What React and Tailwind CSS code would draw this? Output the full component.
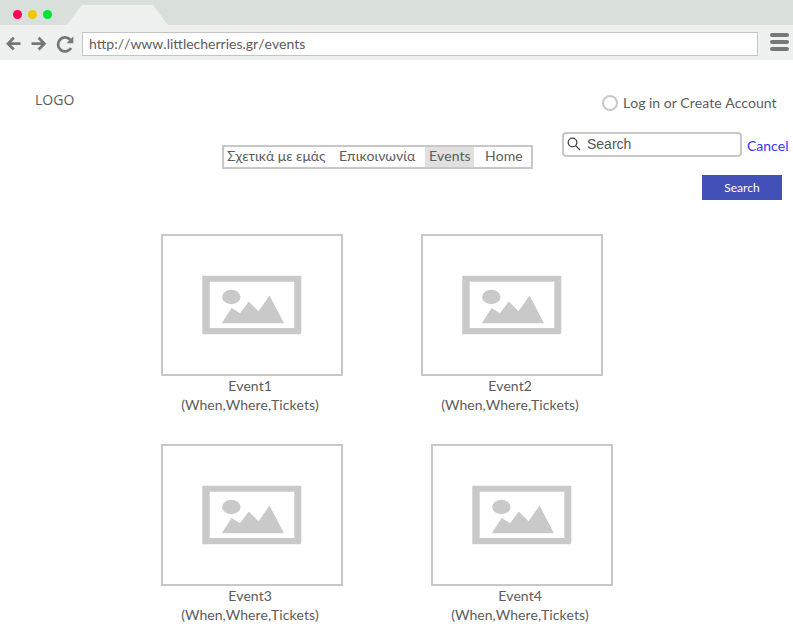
import React from "react";

function BrowserBar() {
  return (
    <header className="bg-[#eff1f0]">
      <div className="flex h-[25px] bg-[#d9dfdb]">
        <div className="flex w-[67px] items-center gap-[6px] pt-[4px] pl-[12.500px]">
          <span className="size-[9px] rounded-full bg-[#ff0055]" />
          <span className="size-[9px] rounded-full bg-[#f3c500]" />
          <span className="size-[9px] rounded-full bg-[#00e335]" />
        </div>
        <svg className="h-[25px] w-[101px]" viewBox="0 0 101 25">
          <path d="M0 25 L14.500 5 H86 L101 25 Z" fill="#eff1f0" />
        </svg>
      </div>
      <div className="flex h-[35px] items-start">
        <svg
          className="h-[35px] w-[82px]"
          viewBox="0 25 82 35"
          fill="none"
          stroke="#777"
          strokeWidth="2.800"
        >
          <path d="M20.500 43.700 H8.500 M13.800 37.800 L8 43.700 L13.800 49.600" />
          <path d="M31.500 43.700 H44 M38.600 37.800 L44.400 43.700 L38.600 49.600" />
          <path d="M70.600 40.200 A7 7 0 1 0 71 48.100" />
          <path d="M73.300 36.500 V43.200 H66.500 Z" fill="#777" stroke="none" />
        </svg>
        <div className="mt-[7px] flex h-[24px] w-[676px] items-center border border-[#c4c4c4] bg-white pl-[6px] text-[14px] leading-[22px]">
          http://www.littlecherries.gr/events
        </div>
        <div className="mt-[8px] ml-[12px] flex w-[19px] flex-col gap-[3px]">
          <span className="h-[4px] rounded-full bg-[#777]" />
          <span className="h-[4px] rounded-full bg-[#777]" />
          <span className="h-[4px] rounded-full bg-[#777]" />
        </div>
      </div>
    </header>
  );
}

function Toolbar() {
  return (
    <div className="flex h-[174px] items-start">
      <div className="mt-[30px] ml-[35px] w-[187px] font-['Open_Sans',sans-serif] text-[14px] leading-[19px]">
        LOGO
      </div>
      <nav className="mt-[85px] flex h-[24px] w-[311px] border-2 border-[#c8c8c8] leading-[18px]">
        <a className="w-[112px] pl-[3px]">Σχετικά με εμάς</a>
        <a className="w-[89px] pl-[3px]">Επικοινωνία</a>
        <a className="w-[49px] bg-[#e0e0e0] pl-[4px]">Events</a>
        <a className="pl-[11px]">Home</a>
      </nav>
      <div className="ml-[29px] flex w-[231px] flex-col">
        <div className="mt-[32px] ml-[39.500px] flex h-[21px] items-center gap-[5.500px]">
          <span className="size-[16px] rounded-full border-2 border-[#c8c8c8]" />
          <span className="leading-[20px]">Log in or Create Account</span>
        </div>
        <div className="mt-[19px] flex h-[25px]">
          <div className="flex w-[180px] items-center rounded-[4px] border-2 border-[#c8c8c8] pl-[3px]">
            <svg className="mb-[1px] size-[14px]" viewBox="0 0 14 14" fill="none" stroke="#444" strokeWidth="1.300">
              <circle cx="5.500" cy="5.500" r="4.300" />
              <path d="M8.600 8.600 L13 13" />
            </svg>
            <span className="ml-[6px] font-['Liberation_Sans',Arial,sans-serif] text-[14px] text-[#555]">
              Search
            </span>
          </div>
          <a className="mt-[4px] ml-[5px] leading-[20px] text-[#3333ff]">Cancel</a>
        </div>
        <button className="mt-[18px] ml-[140px] h-[25px] w-[80px] bg-[#4350b8] text-[12px] text-white">
          Search
        </button>
      </div>
    </div>
  );
}

function EventCard({ title }) {
  return (
    <article className="w-[182px]">
      <div className="h-[142px] border-2 border-[#c8c8c8]">
        <svg className="h-[138px] w-[178px]" viewBox="0 0 178 138" fill="#c9c9c9">
          <path
            fillRule="evenodd"
            d="M39.300 39.800 H138.300 V97 L137 98.300 H39.300 Z M46.700 45.700 V92 H131.300 V45.700 Z"
          />
          <ellipse cx="68.300" cy="61" rx="9.200" ry="7.200" />
          <path d="M58.700 87.300 L68.700 72 L77 77.300 L85.800 65.500 L95.500 75.300 L106.500 59.500 L121 87.300 Z" />
        </svg>
      </div>
      <div className="w-[178px] text-center leading-[19px]">
        <p>{title}</p>
        <p>(When,Where,Tickets)</p>
      </div>
    </article>
  );
}

export default function App() {
  return (
    <div className="h-[638px] w-[793px] overflow-hidden bg-white font-[Lato,sans-serif] text-[14px] whitespace-nowrap text-[#5c5c5c] [font-kerning:none]">
      <BrowserBar />
      <Toolbar />
      <main className="flex flex-col gap-[30px] pl-[161px]">
        <div className="flex gap-[78px]">
          <EventCard title="Event1" />
          <EventCard title="Event2" />
        </div>
        <div className="flex gap-[88px]">
          <EventCard title="Event3" />
          <EventCard title="Event4" />
        </div>
      </main>
    </div>
  );
}
